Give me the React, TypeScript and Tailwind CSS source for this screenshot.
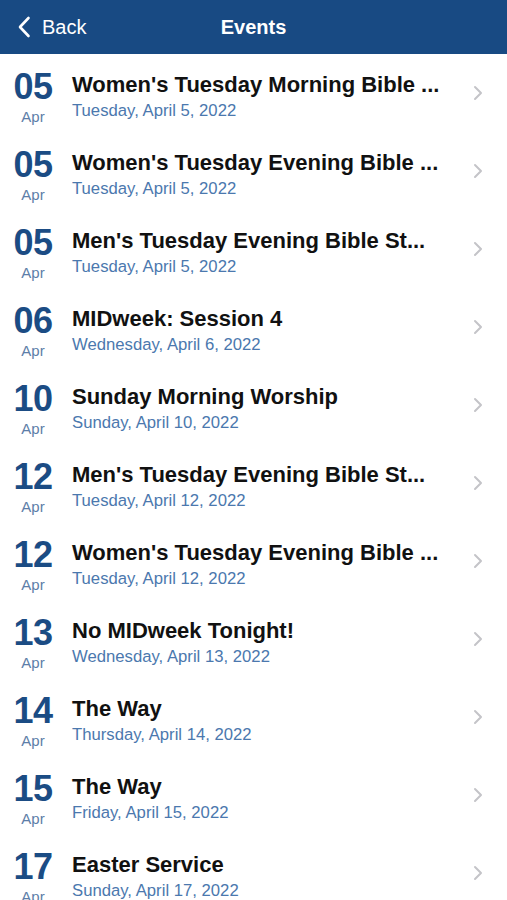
import React from 'react';

interface EventItem {
  day: string;
  month: string;
  title: string;
  date: string;
}

const events: EventItem[] = [
  { day: '05', month: 'Apr', title: "Women's Tuesday Morning Bible ...", date: 'Tuesday, April 5, 2022' },
  { day: '05', month: 'Apr', title: "Women's Tuesday Evening Bible ...", date: 'Tuesday, April 5, 2022' },
  { day: '05', month: 'Apr', title: "Men's Tuesday Evening Bible St...", date: 'Tuesday, April 5, 2022' },
  { day: '06', month: 'Apr', title: 'MIDweek: Session 4', date: 'Wednesday, April 6, 2022' },
  { day: '10', month: 'Apr', title: 'Sunday Morning Worship', date: 'Sunday, April 10, 2022' },
  { day: '12', month: 'Apr', title: "Men's Tuesday Evening Bible St...", date: 'Tuesday, April 12, 2022' },
  { day: '12', month: 'Apr', title: "Women's Tuesday Evening Bible ...", date: 'Tuesday, April 12, 2022' },
  { day: '13', month: 'Apr', title: 'No MIDweek Tonight!', date: 'Wednesday, April 13, 2022' },
  { day: '14', month: 'Apr', title: 'The Way', date: 'Thursday, April 14, 2022' },
  { day: '15', month: 'Apr', title: 'The Way', date: 'Friday, April 15, 2022' },
  { day: '17', month: 'Apr', title: 'Easter Service', date: 'Sunday, April 17, 2022' },
];

const Chevron: React.FC = () => (
  <svg width="10" height="16" viewBox="0 0 10 16" fill="none">
    <path d="M2 2l6 6-6 6" stroke="#c4c4c8" strokeWidth="2" strokeLinecap="round" strokeLinejoin="round" />
  </svg>
);

const EventRow: React.FC<{ item: EventItem }> = ({ item }) => (
  <div className="flex h-[78px] shrink-0 items-start">
    <div className="flex w-[66px] shrink-0 flex-col items-center pt-[15px]">
      <span className="text-[36px] font-bold leading-none tracking-[-0.5px] text-[#1b4c84]">{item.day}</span>
      <span className="mt-[4px] text-[15px] leading-none text-[#5d7ea8]">{item.month}</span>
    </div>
    <div className="ml-[6px] flex min-w-0 flex-1 flex-col pt-[20px]">
      <span className="whitespace-nowrap text-[22px] font-bold leading-none text-[#111]">{item.title}</span>
      <span className="mt-[7px] text-[16.7px] leading-none text-[#4b78ae]">{item.date}</span>
    </div>
    <div className="flex h-full w-[62px] shrink-0 items-center justify-center pl-[3px]">
      <Chevron />
    </div>
  </div>
);

const App: React.FC = () => {
  return (
    <div className="flex h-[900px] w-full flex-col overflow-hidden bg-white font-['Liberation_Sans',Arial,sans-serif]">
      <div className="relative flex h-[54px] shrink-0 items-center bg-[#184a83] px-[17px] text-white">
        <svg width="14" height="22" viewBox="0 0 14 22" fill="none">
          <path d="M11.5 2L3 11l8.5 9" stroke="white" strokeWidth="2.6" strokeLinecap="round" strokeLinejoin="round" />
        </svg>
        <span className="ml-[11px] text-[20px] leading-none">Back</span>
        <span className="absolute left-1/2 -translate-x-1/2 text-[20px] font-bold leading-none">Events</span>
      </div>
      <div className="flex flex-col">
        {events.map((e, i) => (
          <EventRow key={i} item={e} />
        ))}
      </div>
    </div>
  );
};

export default App;
